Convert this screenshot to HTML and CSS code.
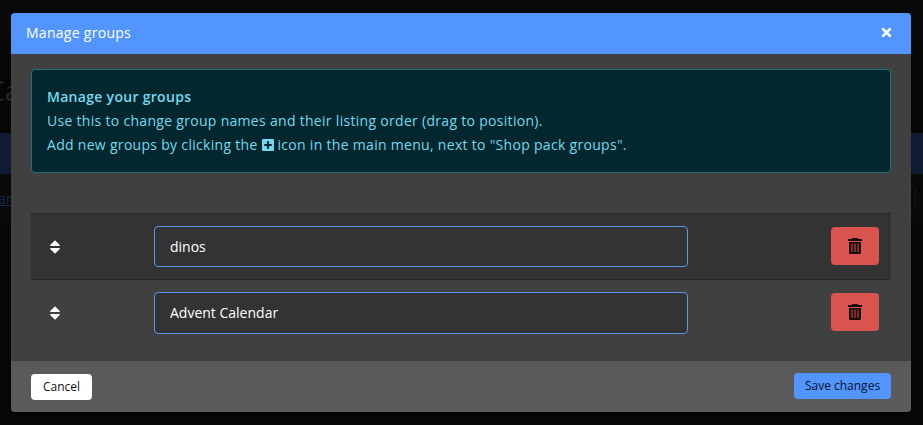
FILE: index.html
```html
<!DOCTYPE html>
<html lang="en">
<head>
<meta charset="utf-8">
<title>Manage groups</title>
<link rel="stylesheet" href="styles.css">
</head>
<body>
<div class="page">
  <div class="page-top"></div>
  <div class="page-title">Ca</div>
  <div class="page-bar"></div>
  <div class="page-row"><span class="page-link">ar</span><span class="page-box"></span></div>
</div>
<div class="modal">
  <header class="modal-header">
    <span>Manage groups</span>
    <svg class="close" viewBox="0 0 10 10"><path d="M1.200 1.200 8.800 8.800M8.800 1.200 1.200 8.800"/></svg>
  </header>
  <main class="modal-body">
    <div class="info">
      <strong>Manage your groups</strong><br>
      <span>Use this to change group names and their listing order (drag to position).</span><br>
      <span>Add new groups by clicking the <svg class="plus" viewBox="0 0 448 448"><path fill-rule="evenodd" d="M48 0h352a48 48 0 0 1 48 48v352a48 48 0 0 1-48 48H48a48 48 0 0 1-48-48V48A48 48 0 0 1 48 0zM184 84v100H84v80h100v100h80V264h100v-80H264V84z"/></svg> icon in the main menu, next to "Shop pack groups".</span>
    </div>
    <div class="groups">
      <div class="row striped">
        <svg class="sort" viewBox="0 0 10 14"><path d="M5 .3 9.800 5.100q.4.900-.6.900H.8q-1 0-.6-.9zM5 13.700 9.800 8.900q.4-.9-.6-.9H.8q-1 0-.6.900z"/></svg>
        <input class="field" value="dinos">
        <button class="delete"><svg class="trash" viewBox="0 0 14 16"><path fill-rule="evenodd" d="M4.500 0h5l.7 1H14v2H0V1h3.800zM1 4h12v10.500a1.500 1.500 0 0 1-1.500 1.500h-9A1.500 1.500 0 0 1 1 14.500zM3.500 5.500v8.500h1V5.500zM6.500 5.500v8.500h1V5.500zM9.500 5.500v8.500h1V5.500z"/></svg></button>
      </div>
      <div class="row">
        <svg class="sort" viewBox="0 0 10 14"><path d="M5 .3 9.800 5.100q.4.900-.6.900H.8q-1 0-.6-.9zM5 13.700 9.800 8.900q.4-.9-.6-.9H.8q-1 0-.6.900z"/></svg>
        <input class="field tall" value="Advent Calendar">
        <button class="delete"><svg class="trash" viewBox="0 0 14 16"><path fill-rule="evenodd" d="M4.500 0h5l.7 1H14v2H0V1h3.800zM1 4h12v10.500a1.500 1.500 0 0 1-1.500 1.500h-9A1.500 1.500 0 0 1 1 14.500zM3.500 5.500v8.500h1V5.500zM6.500 5.500v8.500h1V5.500zM9.500 5.500v8.500h1V5.500z"/></svg></button>
      </div>
    </div>
  </main>
  <footer class="modal-footer">
    <button class="btn cancel">Cancel</button>
    <button class="btn save">Save changes</button>
  </footer>
</div>
</body>
</html>
```
FILE: styles.css
```css
* { box-sizing: border-box; }
body {
  margin: 0;
  width: 923px;
  height: 425px;
  overflow: hidden;
  background: #060606;
  font: 14px/24px "Open Sans", "Noto Sans", sans-serif;
}
button, input { font-family: inherit; margin: 0; }
svg { display: block; }
.page { height: 425px; background: #060606; }
.page-top { height: 39px; background: #090909; }
.page-title {
  height: 94px;
  padding-top: 33px;
  margin-left: -13px;
  font-size: 28px;
  line-height: 36px;
  color: #272727;
}
.page-bar { height: 41px; background: #0f1b33; }
.page-row {
  height: 50px;
  background: #090909;
  display: flex;
  justify-content: space-between;
  align-items: center;
}
.page-link { color: #14264a; text-decoration: underline; margin-left: -2px; }
.page-box { width: 30px; height: 26px; margin-right: 7px; border: 1px solid #151515; border-radius: 4px; }
.modal {
  position: absolute;
  left: 11px;
  top: 13px;
  width: 900px;
  height: 399px;
  display: flex;
  flex-direction: column;
  border-radius: 4px;
  overflow: hidden;
  background: #404040;
}
.modal-header {
  height: 41px;
  padding: 0 19px 2px 15px;
  display: flex;
  align-items: center;
  justify-content: space-between;
  background: #5295ff;
  color: #fff;
  letter-spacing: .28px;
}
.close { width: 11px; height: 11px; stroke: #fff; stroke-width: 2.4; }
.modal-body { flex: 1; padding: 15px 20px 0; }
.info {
  height: 104px;
  padding: 15px;
  border: 1px solid #1d707b;
  border-radius: 4px;
  background: #03272e;
  color: #74daef;
  letter-spacing: .3px;
  white-space: nowrap;
}
.info strong { font-weight: 600; }
.plus { display: inline-block; width: 12px; height: 12px; vertical-align: -1px; fill: currentColor; }
.groups { margin-top: 40px; }
.row {
  height: 66px;
  border-top: 1px solid #282828;
  padding: 0 12px 0 19px;
  display: flex;
  align-items: center;
}
.striped { background: #333; }
.sort { width: 10px; height: 14px; fill: #fff; }
.field {
  width: 534px;
  height: 41px;
  margin-left: 94px;
  padding: 0 15px;
  border: 1px solid #5b94eb;
  border-radius: 4px;
  background: #333;
  color: #fff;
  font-size: 14px;
}
.tall { height: 42px; }
.delete {
  width: 48px;
  height: 38px;
  margin: 0 0 1px auto;
  padding: 0;
  border: 0;
  border-radius: 4px;
  display: flex;
  align-items: center;
  justify-content: center;
  background: #d9534f;
}
.trash { width: 14px; height: 16px; fill: #170b0b; }
.modal-footer {
  height: 51px;
  padding: 0 20px;
  display: flex;
  align-items: center;
  justify-content: space-between;
  background: #5a5a5a;
}
.btn { height: 26px; padding: 0; border: 0; border-radius: 4px; font-size: 12px; line-height: 26px; }
.cancel { width: 61px; margin-top: 1px; background: #fff; color: #111; }
.save { width: 97px; margin-top: -1px; background: #5295ff; color: #081327; }
```
